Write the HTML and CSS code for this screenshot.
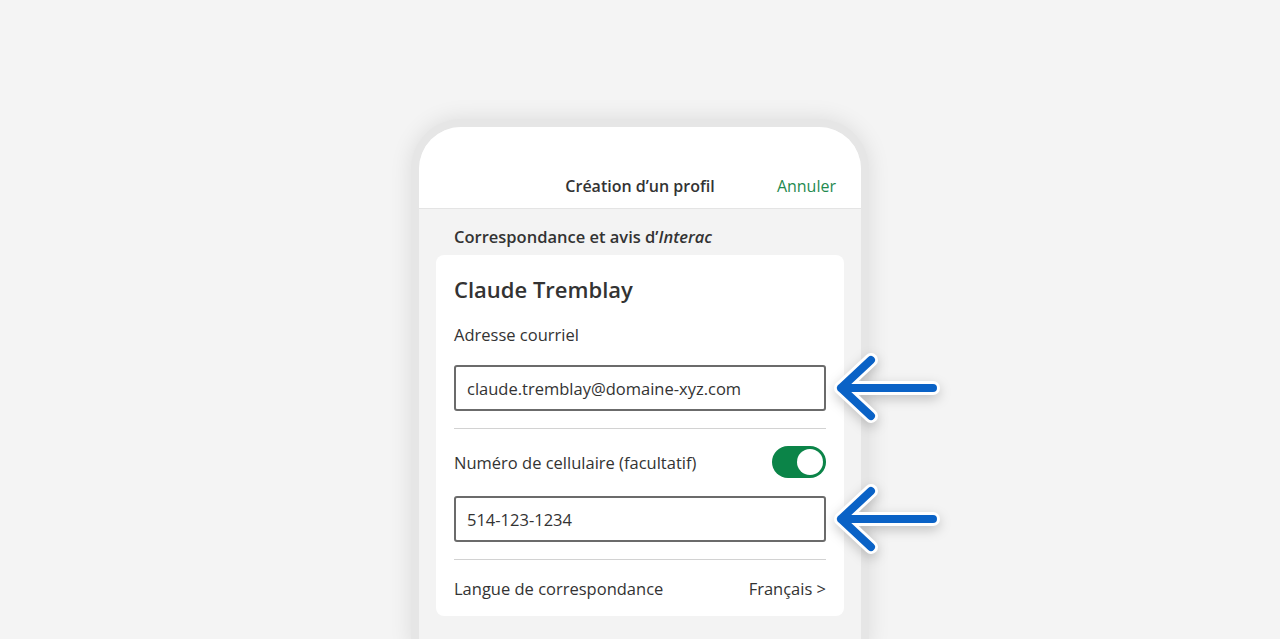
FILE: index.html
```html
<!DOCTYPE html>
<html lang="fr">
<head>
    <meta charset="UTF-8">
    <meta name="viewport" content="width=device-width, initial-scale=1.0">
    <title>Création d'un profil</title>
    <link rel="stylesheet" href="styles.css">
</head>
<body>
    <div class="stage">
        <div class="phone">
            <div class="phone-header">
                <span class="title">Création d’un profil</span>
                <span class="cancel">Annuler</span>
            </div>
            <div class="screen">
                <h3 class="section-label">Correspondance et avis d’<em>Interac</em></h3>
                <div class="card">
                    <h2 class="name">Claude Tremblay</h2>
                    <div class="label">Adresse courriel</div>
                    <div class="field">
                        <div class="input">claude.tremblay@domaine-xyz.com</div>
                        <svg class="arrow" width="110" height="80" viewBox="0 0 110 80">
                            <path class="arrow-outline" d="M100 37 H8 M38 9 L8 37 L38 65"/>
                            <path class="arrow-line" d="M100 37 H8 M38 9 L8 37 L38 65"/>
                        </svg>
                    </div>
                    <hr class="divider">
                    <div class="row">
                        <span>Numéro de cellulaire (facultatif)</span>
                        <span class="toggle"><span class="knob"></span></span>
                    </div>
                    <div class="field">
                        <div class="input">514-123-1234</div>
                        <svg class="arrow" width="110" height="80" viewBox="0 0 110 80">
                            <path class="arrow-outline" d="M100 37 H8 M38 9 L8 37 L38 65"/>
                            <path class="arrow-line" d="M100 37 H8 M38 9 L8 37 L38 65"/>
                        </svg>
                    </div>
                    <hr class="divider">
                    <div class="row lang">
                        <span>Langue de correspondance</span>
                        <span>Français &gt;</span>
                    </div>
                </div>
            </div>
        </div>
    </div>
</body>
</html>
```

FILE: styles.css
```css
body {
    margin: 0;
    height: 639px;
    overflow: hidden;
    background-color: #f4f4f4;
    font-family: "Open Sans", Lato, sans-serif;
    color: #333333;
}

.stage {
    display: flex;
    justify-content: center;
    padding-top: 119px;
}

.phone {
    width: 442px;
    height: 520px;
    border: 8px solid #e6e6e6;
    border-bottom: none;
    border-radius: 50px 50px 0 0;
    background-color: #f3f3f3;
    box-shadow: 0 0 22px rgba(0, 0, 0, 0.1);
}

.phone-header {
    position: relative;
    height: 82px;
    box-sizing: border-box;
    background-color: #ffffff;
    border-radius: 42px 42px 0 0;
    border-bottom: 1px solid #e4e4e4;
    display: flex;
    align-items: flex-end;
    justify-content: center;
    padding-bottom: 11px;
}

.title {
    font-size: 16px;
    line-height: 22px;
    font-weight: 600;
}

.cancel {
    position: absolute;
    right: 25px;
    bottom: 11px;
    font-size: 16px;
    line-height: 22px;
    color: #1f8a50;
}

.screen {
    padding: 0 17px;
}

.section-label {
    margin: 0;
    padding: 18px 18px 8px;
    font-size: 16.5px;
    line-height: 20px;
    font-weight: 600;
}

.card {
    background-color: #ffffff;
    border-radius: 8px;
    padding: 19px 18px 17px;
}

.name {
    margin: 0 0 20px;
    font-size: 22px;
    line-height: 30px;
    font-weight: 600;
}

.label {
    font-size: 16.5px;
    line-height: 22px;
    margin-bottom: 19px;
}

.field {
    position: relative;
}

.input {
    height: 46px;
    box-sizing: border-box;
    border: 2px solid #6b6b6b;
    border-radius: 3px;
    padding: 0 11px;
    display: flex;
    align-items: center;
    font-size: 16.5px;
}

.arrow {
    position: absolute;
    left: 379px;
    top: -14px;
    overflow: visible;
    filter: drop-shadow(0 4px 6px rgba(0, 0, 0, 0.2));
}

.arrow-outline {
    fill: none;
    stroke: #ffffff;
    stroke-width: 14;
    stroke-linecap: round;
    stroke-linejoin: round;
}

.arrow-line {
    fill: none;
    stroke: #0a62c6;
    stroke-width: 8;
    stroke-linecap: round;
    stroke-linejoin: round;
}

.divider {
    border: none;
    border-top: 1px solid #d2d2d2;
    margin: 17px 0 0;
}

.row {
    display: flex;
    justify-content: space-between;
    align-items: center;
    font-size: 16.5px;
    height: 32px;
    margin: 17px 0 18px;
}

.row.lang {
    height: 22px;
    margin: 17px 0 0;
}

.toggle {
    width: 54px;
    height: 32px;
    border-radius: 16px;
    background-color: #0b8448;
    position: relative;
}

.knob {
    position: absolute;
    right: 3px;
    top: 3px;
    width: 26px;
    height: 26px;
    border-radius: 50%;
    background-color: #ffffff;
}
```
